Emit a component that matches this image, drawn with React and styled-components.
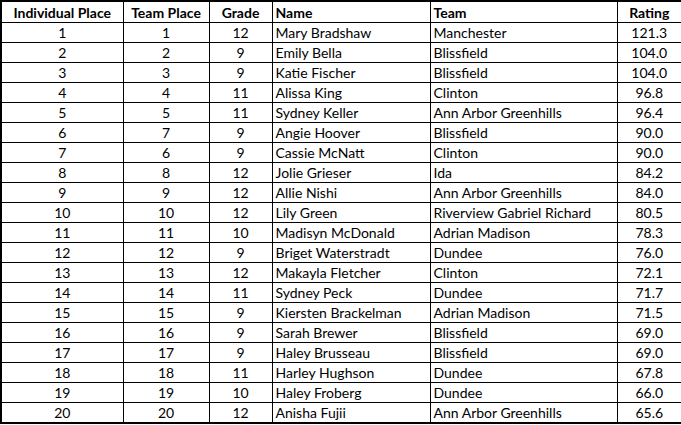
import React from "react";
import styled, { createGlobalStyle } from "styled-components";

const rows = [
	[1, 1, 12, "Mary Bradshaw", "Manchester", "121.3"],
	[2, 2, 9, "Emily Bella", "Blissfield", "104.0"],
	[3, 3, 9, "Katie Fischer", "Blissfield", "104.0"],
	[4, 4, 11, "Alissa King", "Clinton", "96.8"],
	[5, 5, 11, "Sydney Keller", "Ann Arbor Greenhills", "96.4"],
	[6, 7, 9, "Angie Hoover", "Blissfield", "90.0"],
	[7, 6, 9, "Cassie McNatt", "Clinton", "90.0"],
	[8, 8, 12, "Jolie Grieser", "Ida", "84.2"],
	[9, 9, 12, "Allie Nishi", "Ann Arbor Greenhills", "84.0"],
	[10, 10, 12, "Lily Green", "Riverview Gabriel Richard", "80.5"],
	[11, 11, 10, "Madisyn McDonald", "Adrian Madison", "78.3"],
	[12, 12, 9, "Briget Waterstradt", "Dundee", "76.0"],
	[13, 13, 12, "Makayla Fletcher", "Clinton", "72.1"],
	[14, 14, 11, "Sydney Peck", "Dundee", "71.7"],
	[15, 15, 9, "Kiersten Brackelman", "Adrian Madison", "71.5"],
	[16, 16, 9, "Sarah Brewer", "Blissfield", "69.0"],
	[17, 17, 9, "Haley Brusseau", "Blissfield", "69.0"],
	[18, 18, 11, "Harley Hughson", "Dundee", "67.8"],
	[19, 19, 10, "Haley Froberg", "Dundee", "66.0"],
	[20, 20, 12, "Anisha Fujii", "Ann Arbor Greenhills", "65.6"],
];

// column widths measured off the grid lines
const widths = [122, 86, 63, 158, 187, 65];
const aligns = ["center", "center", "center", "left", "left", "center"];
const headers = ["Individual Place", "Team Place", "Grade", "Name", "Team", "Rating"];

const GlobalStyle = createGlobalStyle`
	body {
		margin: 0;
		background: #ffffff;
	}
`;

const Sheet = styled.table`
	border-collapse: collapse;
	table-layout: fixed;
	width: 681px;
	border: 2px solid #000;
	font-family: Lato, "Open Sans", sans-serif;
	font-size: 14px;
	color: #000;
`;

const HeadCell = styled.th`
	height: 19px;
	padding: 1px 3px 0;
	border: 1px solid #000;
	font-weight: bold;
	text-align: ${(p) => p.$align};
	white-space: nowrap;
	line-height: 18px;
`;

const Cell = styled.td`
	height: 18px;
	padding: 1px 3px 0;
	border: 1px solid #000;
	text-align: ${(p) => p.$align};
	white-space: nowrap;
	line-height: 18px;
`;

const App = () => {
	return (
		<>
			<GlobalStyle />
			<Sheet>
				<colgroup>
					{widths.map((w, i) => (
						<col key={i} style={{ width: w }} />
					))}
				</colgroup>
				<thead>
					<tr>
						{headers.map((h, i) => (
							<HeadCell key={h} $align={aligns[i]}>
								{h}
							</HeadCell>
						))}
					</tr>
				</thead>
				<tbody>
					{rows.map((r) => (
						<tr key={r[0]}>
							{r.map((v, i) => (
								<Cell key={i} $align={aligns[i]}>
									{v}
								</Cell>
							))}
						</tr>
					))}
				</tbody>
			</Sheet>
		</>
	);
};

export default App;
